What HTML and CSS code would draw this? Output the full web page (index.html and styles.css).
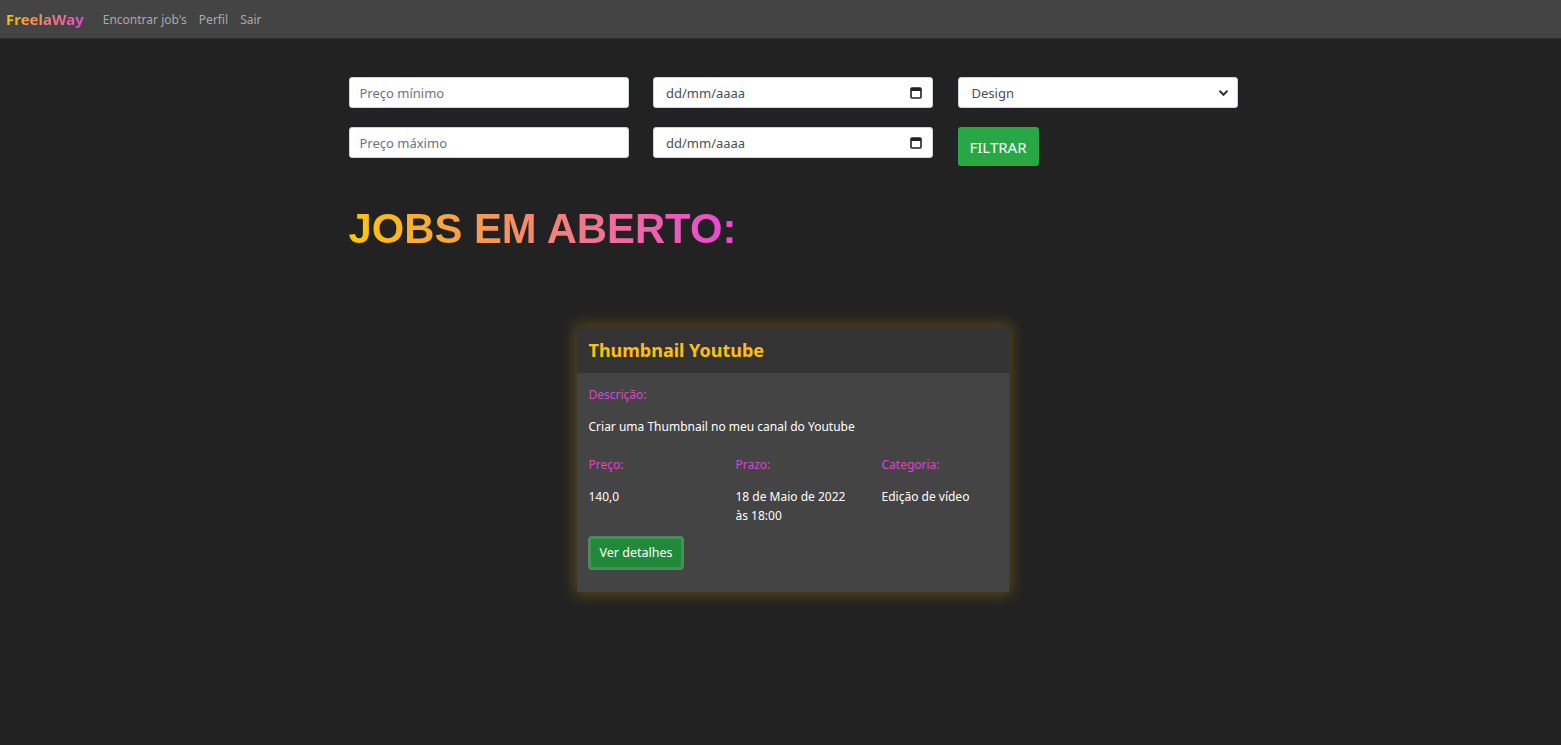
FILE: index.html
```html
<!DOCTYPE html>
<html lang="pt-BR">
<head>
<meta charset="utf-8">
<title>FreelaWay</title>
<link rel="stylesheet" href="styles.css">
</head>
<body>
<nav class="navbar">
  <a class="brand" href="#">FreelaWay</a>
  <a class="nav-link" href="#">Encontrar job's</a>
  <a class="nav-link" href="#">Perfil</a>
  <a class="nav-link" href="#">Sair</a>
</nav>
<main class="container">
  <form class="filters">
    <input class="field" type="text" placeholder="Preço mínimo">
    <div class="field date"><span class="ph">dd/mm/aaaa</span>
      <svg class="cal" width="12" height="13" viewBox="0 0 12 13"><rect x="1" y="2" width="10" height="10" rx="1" fill="none" stroke="#222" stroke-width="1.6"/><rect x="1" y="2" width="10" height="3" fill="#222"/></svg>
    </div>
    <div class="field select"><span class="sel">Design</span>
      <svg class="chev" width="11" height="8" viewBox="0 0 11 8"><path d="M1.5 1.8 L5.5 5.8 L9.5 1.8" fill="none" stroke="#333" stroke-width="2"/></svg>
    </div>
    <input class="field" type="text" placeholder="Preço máximo">
    <div class="field date"><span class="ph">dd/mm/aaaa</span>
      <svg class="cal" width="12" height="13" viewBox="0 0 12 13"><rect x="1" y="2" width="10" height="10" rx="1" fill="none" stroke="#222" stroke-width="1.6"/><rect x="1" y="2" width="10" height="3" fill="#222"/></svg>
    </div>
    <div><button type="button" class="btn-filter">FILTRAR</button></div>
  </form>

  <h1 class="title"><span>JOBS EM ABERTO:</span></h1>

  <section class="card">
    <header class="card-header">Thumbnail Youtube</header>
    <div class="card-body">
      <p class="label">Descrição:</p>
      <p class="text">Criar uma Thumbnail no meu canal do Youtube</p>
      <div class="cols">
        <div><p class="label">Preço:</p><p class="text">140,0</p></div>
        <div><p class="label">Prazo:</p><p class="text">18 de Maio de 2022 às 18:00</p></div>
        <div><p class="label">Categoria:</p><p class="text">Edição de vídeo</p></div>
      </div>
      <button type="button" class="btn-details">Ver detalhes</button>
    </div>
  </section>
</main>
</body>
</html>
```
FILE: styles.css
```css
* { box-sizing: border-box; }
html, body { margin: 0; padding: 0; }
body {
  background: #222222;
  font-family: "Noto Sans", "Open Sans", sans-serif;
  color: #fff;
  min-height: 745px;
}
.navbar {
  height: 39px;
  background: #444444;
  display: flex;
  align-items: center;
  padding: 0 6px;
  border-bottom: 1px solid #2e2e2e;
}
.brand {
  font-weight: 700;
  font-size: 15px;
  text-decoration: none;
  background: linear-gradient(90deg, #ffc107, #e645d8);
  -webkit-background-clip: text;
  background-clip: text;
  color: transparent;
  margin-right: 19px;
}
.nav-link {
  color: #a9a9a9;
  text-decoration: none;
  font-size: 12px;
  margin-right: 12px;
}
.container {
  width: 912px;
  margin: 0 auto;
  padding: 38px 0 0 24px;
}
.filters {
  display: grid;
  grid-template-columns: repeat(3, 280px);
  column-gap: 24.5px;
  row-gap: 19px;
}
.field {
  height: 31px;
  background: #fff;
  border: 1px solid #ced4da;
  border-radius: 3px;
  font-family: inherit;
  font-size: 13px;
  color: #495057;
  padding: 0 10px;
  outline: none;
}
.field::placeholder { color: #6c757d; }
.date {
  display: flex;
  align-items: center;
  justify-content: space-between;
  padding: 0 10px 0 12px;
}
.ph { color: #495057; }
.select {
  display: flex;
  align-items: center;
  justify-content: space-between;
  padding: 0 8px 0 13px;
}
.sel { color: #495057; }
.btn-filter {
  height: 39px;
  padding: 0 12px;
  background: #28a745;
  color: #fff;
  border: none;
  border-radius: 3px;
  font-family: inherit;
  font-size: 15px;
}
.title {
  margin: 39px 0 0;
  font-family: "Liberation Sans", Arial, sans-serif;
  font-weight: 700;
  font-size: 41.8px;
  line-height: 48px;
}
.title span {
  background: linear-gradient(90deg, #ffc50a, #e846dc);
  -webkit-background-clip: text;
  background-clip: text;
  color: transparent;
}
.card {
  width: 432px;
  margin: 74px auto 0;
  background: #444444;
  box-shadow: 0 0 14px 2px rgba(200, 160, 10, 0.35);
}
.card-header {
  height: 46px;
  background: #333333;
  color: #ffc107;
  font-weight: 700;
  font-size: 18px;
  display: flex;
  align-items: center;
  padding: 0 12px;
}
.card-body {
  padding: 12px 12px 22px;
  font-size: 12px;
  line-height: 19.5px;
}
.card-body p { margin: 0 0 12.5px; }
.label { color: #d946d0; }
.text { color: #fff; }
.cols {
  display: grid;
  grid-template-columns: 147px 146px 1fr;
  margin-top: 18px;
}
.cols > div { padding-right: 24px; }
.cols .text { margin-bottom: 10px; }
.btn-details {
  height: 34px;
  padding: 0 9px;
  background: #1f8a3a;
  color: #fff;
  border: 3px solid #4b8c5b;
  border-radius: 4px;
  font-family: inherit;
  font-size: 12.5px;
  margin-left: -1px;
}
```
